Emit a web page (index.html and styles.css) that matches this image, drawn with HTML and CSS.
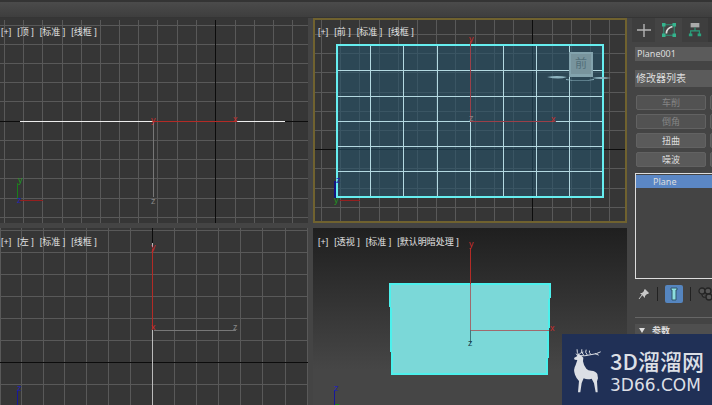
FILE: index.html
```html
<!DOCTYPE html>
<html lang="zh-CN">
<head>
<meta charset="utf-8">
<title>Plane001</title>
<link rel="stylesheet" href="styles.css">
</head>
<body>
<div class="app">
  <header class="toolbar"></header>
  <main class="workspace">
    <div class="views">
      <section class="view">
        <svg class="scene" viewBox="0 18 308 205" preserveAspectRatio="xMinYMin slice">
          <path class="grid" d="M4 20v203M23 20v203M42 20v203M62 20v203M81 20v203M100 20v203M119 20v203M138 20v203M157 20v203M177 20v203M196 20v203M235 20v203M254 20v203M273 20v203M292 20v203M0 25h308M0 44h308M0 63h308M0 82h308M0 101h308M0 140h308M0 159h308M0 178h308M0 198h308M0 217h308"/>
          <path class="origin" d="M215 20v203M0 121h308"/>
          <path class="white" d="M20 121h265"/>
          <path class="gray" d="M153 121v76"/>
          <rect class="axis" x="153" y="121" width="84" height="1"/>
          <text class="t-red" x="151" y="123">y</text><text class="t-red" x="233" y="122">x</text><text class="t-gray" x="151" y="204">z</text>
          <path class="green" d="M17 183v16"/><path class="dark-red" d="M19 200h24"/>
          <text class="t-green" x="18" y="183">y</text><text class="t-blue" x="17" y="203">z</text>
        </svg>
        <p class="label"><span>[+]</span><span>[顶 ]</span><span>[标准 ]</span><span>[线框 ]</span></p>
      </section>
      <section class="view active">
        <svg class="scene" viewBox="315 20 310 201" preserveAspectRatio="xMinYMin slice">
          <path class="grid" d="M321 19v204M340 19v204M359 19v204M379 19v204M398 19v204M417 19v204M436 19v204M455 19v204M475 19v204M494 19v204M513 19v204M552 19v204M571 19v204M590 19v204M609 19v204M313 34h314M313 53h314M313 72h314M313 92h314M313 111h314M313 130h314M313 168h314M313 188h314M313 207h314"/>
          <path class="origin" d="M532 19v204M313 149h314"/>
          <path class="dark-red" d="M340 200h20"/>
          <path class="glass" d="M337 44h267v154H337z"/>
          <path class="mesh" d="M370 44v153M403 44v153M437 44v153M470 121v76M503 44v153M536 44v153M569 44v153M337 70h266M337 96h266M337 121h133M556 121h47M337 146h266M337 171h266"/>
          <path class="outline" d="M337 45h266v152H337z"/>
          <path class="navy" d="M335 181v17"/>
          <rect class="axis soft" x="470" y="41" width="1" height="80"/><rect class="axis soft" x="470" y="121" width="84" height="1"/>
          <text class="t-red" x="469" y="42">y</text><text class="t-red" x="551" y="122">x</text><text class="t-gray" x="469" y="121">z</text>
          <text class="t-blue" x="336" y="183">z</text><text class="t-green" x="334" y="203">y</text>
          <g class="ring"><path d="M547 77q10-2 20 0q-8 3-20 0M592 78q8-2 19 0q-10 2-19 0"/><path d="M566 79q14 3 28 0v1q-14 2-28 0z"/></g>
          <path d="M569 52h24v25h-24z" fill="#83a3ad"/><path d="M571 54h20v20h-20z" fill="#78949d"/>
          <text class="t-cube" x="575" y="68">前</text>
        </svg>
        <p class="label"><span>[+]</span><span>[前 ]</span><span>[标准 ]</span><span>[线框 ]</span></p>
      </section>
      <section class="view">
        <svg class="scene" viewBox="0 228 308 177" preserveAspectRatio="xMinYMin slice">
          <path class="grid" d="M0 228v177M21 228v177M43 228v177M64 228v177M86 228v177M108 228v177M130 228v177M174 228v177M196 228v177M218 228v177M240 228v177M262 228v177M285 228v177M307 228v177M0 230h308M0 252h308M0 274h308M0 296h308M0 318h308M0 340h308M0 384h308"/>
          <path class="origin" d="M0 362h308M152 228v18"/>
          <path class="white dim" d="M152 243v4M152 330v75"/>
          <path class="red" d="M152 249v80"/><path class="gray" d="M154 330h82"/>
          <text class="t-red" x="151" y="250">y</text><text class="t-red" x="151" y="330">x</text><text class="t-gray" x="233" y="330">z</text>
          <path class="blue" d="M17 390v15"/><text class="t-blue" x="17" y="391">z</text>
        </svg>
        <p class="label"><span>[+]</span><span>[左 ]</span><span>[标准 ]</span><span>[线框 ]</span></p>
      </section>
      <section class="view shaded">
        <svg class="scene" viewBox="313 228 314 177" preserveAspectRatio="xMinYMin slice">
          <path d="M390 284h160l-3 90H392z" fill="#7bd8d8" stroke="#4df0ec" stroke-width="2"/>
          <path class="red" d="M470 248v36"/><path class="mauve" d="M470 284v46h79"/>
          <path class="teal" d="M470 330v13"/>
          <text class="t-red" x="469" y="247">y</text><text class="t-red" x="550" y="331">x</text><text class="t-dark" x="468" y="346">z</text>
          <path class="blue" d="M334 390v15"/><text class="t-blue" x="334" y="391">z</text><path class="green" d="M335 404h4"/>
        </svg>
        <p class="label"><span>[+]</span><span>[透视 ]</span><span>[标准 ]</span><span>[默认明暗处理 ]</span></p>
      </section>
    </div>
    <aside class="panel">
      <nav class="tabs">
        <button class="tab" aria-label="Create"><svg width="16" height="16" viewBox="0 0 16 16"><path d="M8 2v13M1 8h14" stroke="#b4b4b4" stroke-width="1.4"/></svg></button>
        <button class="tab on" aria-label="Modify"><svg width="14" height="14" viewBox="0 0 16 16"><path d="M2 2h12v12H2z" fill="none" stroke="#2b9d7b"/><path d="M5 12q0-6 7-8" fill="none" stroke="#ddd" stroke-width="2"/><path d="M0 0h4v4H0zM12 0h4v4h-4zM0 12h4v4H0zM12 12h4v4h-4z" fill="#35b48d"/></svg></button>
        <button class="tab" aria-label="Hierarchy"><svg width="14" height="16" viewBox="0 0 16 18"><path d="M3 1h10v5H3z" fill="#aaa"/><path d="M8 6v4M3 15v-5h10v5" fill="none" stroke="#2b9d7b" stroke-width="1.3"/><path d="M1 13h4v3H1zM11 13h4v3h-4z" fill="#2ba37e"/></svg></button>
      </nav>
      <input class="field" aria-label="Name" value="Plane001">
      <select class="field modifiers" aria-label="Modifiers"><option>修改器列表</option></select>
      <div class="sets">
        <button class="set" disabled>车削</button><button class="set" disabled></button>
        <button class="set" disabled>倒角</button><button class="set" disabled></button>
        <button class="set">扭曲</button><button class="set"></button>
        <button class="set">噪波</button><button class="set"></button>
      </div>
      <ul class="stack"><li class="item">Plane</li></ul>
      <div class="tools">
        <button class="tool" aria-label="Pin"><svg width="12" height="12" viewBox="0 0 12 12"><path d="M7 1l4 4-1 1H9L7 8v2L2 5h2l2-2V2z" fill="#c8c8c8"/><path d="M4 7l-3 4" stroke="#c8c8c8"/></svg></button>
        <span class="bar"></span>
        <button class="tool on" aria-label="Show end result"><svg width="18" height="18" viewBox="0 0 18 18"><path d="M6 3h6v2h-1v10H7V5H6z" fill="#8de0df" stroke="#31576b"/></svg></button>
        <span class="bar"></span>
        <button class="tool" aria-label="Make unique"><svg width="16" height="16" viewBox="0 0 16 16"><g fill="#555" stroke="#242424" stroke-width="1.3"><circle cx="4" cy="5" r="3"/><circle cx="10" cy="5" r="3"/><circle cx="11" cy="11" r="3"/><path d="M4 8q0 4 4 3"/></g></svg></button>
      </div>
      <hr class="divider">
      <button class="rollout"><span class="arrow"></span>参数</button>
    </aside>
  </main>
  <footer class="brand">
    <svg class="deer" viewBox="22 14 92 138"><path fill="#dcdfe5" d="M29 47l10-6-6-8 10 4q9 1 14 9l-1 11q2 14 10 22 5 6 15 6 13 1 18 10l2 13-3 9 2 33h-6l-5-27-7-14q-13 4-24-1l-6 14-4 28h-7l3-34q-8-8-12-19-6-16 2-29l5-15-8-1z"/><path d="M43 38q-6-8-5-16M43 38q4-8 13-9M44 40q18 2 36-3 18-2 28-8M57 37q-8-7-5-15M68 37q-7-7-3-14M79 36q-6-5-4-10M93 34l9 4" fill="none" stroke="#dcdfe5" stroke-width="3" stroke-linecap="round"/></svg>
    <div class="words"><strong class="name">3D溜溜网</strong><span class="site">3D66.COM</span></div>
  </footer>
</div>
</body>
</html>
```
FILE: styles.css
```css
* { box-sizing: border-box; }
body { margin: 0; background: #444; color: #ddd; font-family: "Noto Sans", "Noto Sans CJK SC", sans-serif; }
button, input, select { font: inherit; color: inherit; border: 0; padding: 0; margin: 0; border-radius: 0; }
.app { height: 100vh; display: flex; flex-direction: column; overflow: hidden; }
.toolbar { flex: none; height: 18px; border-top: 2px solid #343434; background: linear-gradient(#4b4b4b, #3e3e3e); border-bottom: 1px solid #353535; }
.workspace { flex: 1; min-height: 0; display: grid; grid-template-columns: minmax(0, 1fr) 80px; column-gap: 5px; }
.views { min-height: 0; display: grid; grid-template-columns: 308fr 314fr; grid-template-rows: 205fr 177fr; gap: 5px; }
.view { position: relative; min-width: 0; min-height: 0; overflow: hidden; background: #363636; }
.active { border: 2px solid #70622f; }
.shaded { background: linear-gradient(#1f1f1f, #464646 80%); }
.scene { display: block; width: 100%; height: 100%; }
.label { position: absolute; left: 1px; top: 7px; margin: 0; display: flex; gap: 6px; font: 9px/14px "Liberation Sans", "Noto Sans CJK SC", sans-serif; color: #e0e0e0; white-space: pre; }
.view:nth-child(even) .label { left: 5px; }
.active .label { top: 5px; }
.view.active .label { left: 3px; }

.scene path { shape-rendering: crispEdges; }
.scene .ring path { fill: #8eb4c0; shape-rendering: auto; }
.grid, .origin, .white, .gray, .red, .dark-red, .green, .blue, .navy, .mesh, .mauve, .teal { fill: none; stroke-width: 1; }
.grid { stroke: #595959; }
.origin { stroke: #0c0c0c; }
.white { stroke: #eee; }
.dim { stroke: #bbb; }
.gray { stroke: #777; }
.red { stroke: #b32b26; }
.axis { fill: #b32b26; }
.soft { fill: #9b4049; }
.dark-red { stroke: #951f1f; }
.green { stroke: #187e1c; }
.blue { stroke: #171799; }
.navy { stroke: #141480; stroke-width: 2; }
.glass { fill: #265369; fill-opacity: .62; }
.mesh { stroke: #b4d9e1; }
.outline { fill: none; stroke: #66eef0; stroke-width: 2; }
.mauve { stroke: #a0696d; }
.teal { stroke: #3f777c; }
.scene text { font: 9px "Liberation Sans", sans-serif; }
.t-red { fill: #c92d2d; }
.t-gray { fill: #888; }
.t-green { fill: #1f9a20; }
.t-blue { fill: #2222b4; }
.t-dark { fill: #1a3d4c; }
.scene .t-cube { fill: #526f79; font: 12px "Noto Sans CJK SC", sans-serif; }

.panel { display: flex; flex-direction: column; min-width: 0; overflow: hidden; padding-left: 3px; background: #444; }
.tabs { display: flex; flex: none; height: 24px; margin: 0 0 5px -3px; background: #383838; }
.tab { flex: none; width: 26px; display: grid; place-items: center; background: #3e3e3e; }
.tab:first-child { width: 23px; }
.tab.on { width: 27px; background: #444; }
.field { flex: none; width: 100%; height: 14px; padding: 0 2px; background: #5b5b5b; font-size: 9px; line-height: 14px; appearance: none; }
.modifiers { height: 17px; margin-top: 9px; padding: 0 1px; font-size: 10px; line-height: 17px; }
.sets { flex: none; display: grid; grid-template-columns: 70px 70px; gap: 4px; margin: 8px 0 6px 1px; }
.set { height: 15px; border-radius: 2px; background: #5a5a5a; border: 1px solid #626262; font-size: 9px; line-height: 13px; }
.set:disabled { color: #858585; background: #525252; }
.stack { flex: none; height: 106px; margin: 0; padding: 1px 0; list-style: none; border: 1px solid #ddd; border-right: 0; background: #444; }
.item { height: 13px; padding-left: 17px; background: #5b87c5; font-size: 9px; line-height: 13px; }
.tools { flex: none; display: flex; align-items: center; gap: 7px; height: 18px; margin: 6px 0 14px 3px; }
.tool { flex: none; display: grid; place-items: center; background: none; }
.tool.on { background: #5585bf; border-radius: 2px; }
.bar { flex: none; width: 1px; height: 14px; background: #222; }
.divider { flex: none; width: 100%; margin: 0 0 6px; border: 0; border-top: 1px solid #666; }
.rollout { flex: none; display: flex; align-items: center; gap: 7px; height: 13px; padding-left: 4px; background: #4f4f4f; font-size: 9px; line-height: 13px; font-weight: bold; }
.arrow { border: 3px solid transparent; border-top: 5px solid #ddd; border-bottom: 0; }

.brand { position: fixed; right: 0; bottom: 0; width: 150px; height: 71px; display: flex; align-items: center; gap: 6px; padding-left: 8px; background: #203056; color: #dcdfe5; }
.deer { flex: none; width: 34px; height: 46px; }
.words { display: flex; flex-direction: column; white-space: nowrap; }
.name { font: 500 22px/30px "Noto Sans CJK SC", sans-serif; }
.site { font: 17px/20px "DejaVu Sans", sans-serif; }
```
